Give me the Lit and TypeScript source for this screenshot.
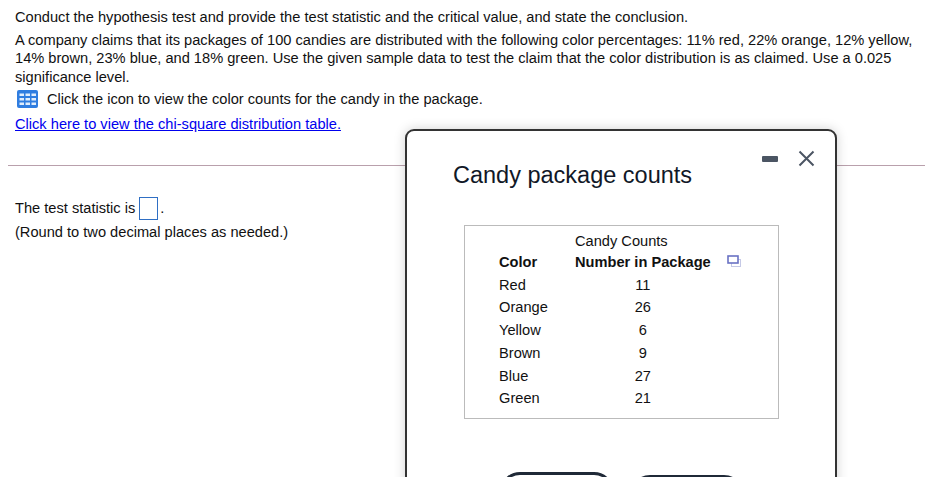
import { html, css, LitElement } from 'lit';
import { customElement } from 'lit/decorators.js';

const ROWS: [string, number][] = [
    ['Red', 11],
    ['Orange', 26],
    ['Yellow', 6],
    ['Brown', 9],
    ['Blue', 27],
    ['Green', 21],
];

@customElement('candy-dialog')
export class CandyDialog extends LitElement {
    static styles = css`
        :host {
            position: absolute;
            left: 405px;
            top: 129px;
            width: 432px;
            height: 420px;
            box-sizing: border-box;
            border: 2px solid #333;
            border-radius: 9px;
            background: #fff;
            box-shadow: 0 0 12px rgba(0, 0, 0, 0.18);
            padding: 29px 56px 0 46px;
            color: #1a1a2a;
        }

        .tools {
            position: absolute;
            top: 19px;
            right: 20px;
            display: flex;
            align-items: center;
            gap: 20px;
        }

        .tools svg {
            display: block;
        }

        h2 {
            margin: 0;
            font-size: 23.5px;
            line-height: 30px;
            font-weight: 400;
            color: #111827;
        }

        .panel {
            margin: 35px 0 0 11px;
            height: 194px;
            box-sizing: border-box;
            border: 1px solid #bbb;
            padding: 4.5px 0 0 34px;
            color: #111;
        }

        table {
            border-collapse: collapse;
            font-size: 14.63px;
        }

        td, th {
            padding: 0;
            height: 22.75px;
            font-weight: 400;
        }

        .head td {
            height: 20px;
        }

        .label {
            text-align: left;
            width: 76px;
        }

        .count {
            text-align: center;
            white-space: nowrap;
        }

        .title {
            text-align: left;
            white-space: nowrap;
        }

        .bold {
            font-weight: 700;
        }

        .copy {
            display: block;
            margin: -2px 0 0 16px;
        }

        .actions {
            display: flex;
            align-items: flex-start;
            gap: 16px;
            margin: 53px 0 0 47px;
        }

        .btn {
            box-sizing: border-box;
            height: 40px;
            width: 114px;
            border: 3px solid #1f2937;
            border-radius: 20px;
            background: #fff;
            flex: none;
        }

        .btn.two {
            margin-top: 3px;
        }
    `;

    render() {
        return html`
            <div class="tools">
                <svg width="16" height="16" viewBox="0 0 16 16"><rect x="0" y="5" width="16" height="6" rx="1" fill="#4b5563"></rect></svg>
                <svg width="17" height="17" viewBox="0 0 17 17"><path d="M1.5 1.5 L15.5 15.5 M15.5 1.5 L1.5 15.5" stroke="#4b5563" stroke-width="2" fill="none"></path></svg>
            </div>
            <h2>Candy package counts</h2>
            <div class="panel">
                <table>
                    <tr class="head">
                        <td class="label"></td>
                        <td class="title">Candy Counts</td>
                        <td></td>
                    </tr>
                    <tr>
                        <td class="label bold">Color</td>
                        <td class="count bold">Number in Package</td>
                        <td><svg class="copy" width="14" height="12" viewBox="0 0 14 12"><rect x="4.5" y="4.5" width="9" height="7" fill="#fff" stroke="#c5c9e6"></rect><rect x="1" y="1" width="10" height="7" fill="#fff" stroke="#6a72c4" stroke-width="1.6"></rect></svg></td>
                    </tr>
                    ${ROWS.map(([color, count]) => html`
                        <tr>
                            <td class="label">${color}</td>
                            <td class="count">${count}</td>
                            <td></td>
                        </tr>
                    `)}
                </table>
            </div>
            <div class="actions">
                <div class="btn one"></div>
                <div class="btn two"></div>
            </div>
        `;
    }
}

@customElement('app-root')
export class AppRoot extends LitElement {
    static styles = css`
        :host {
            display: block;
            position: relative;
            width: 925px;
            height: 477px;
            overflow: hidden;
            background: #fff;
            font-family: "Liberation Sans", Arial, sans-serif;
            font-size: 14.63px;
            color: #111;
        }

        .question {
            padding: 8px 0 0 15px;
            width: 905px;
        }

        p {
            margin: 0;
            line-height: 18.5px;
        }

        .lead {
            margin-bottom: 4px;
        }

        .icon-row {
            display: flex;
            align-items: center;
            gap: 9px;
            margin: 3px 0 6px 2px;
            line-height: 20px;
        }

        .icon-row svg {
            display: block;
        }

        a {
            color: #0000ee;
            line-height: 18px;
        }

        hr {
            border: 0;
            height: 1px;
            background: #b9a0ac;
            margin: 32px 0 0 8px;
        }

        .answer {
            padding: 31px 0 0 15px;
        }

        .statement {
            display: flex;
            align-items: center;
            line-height: 23px;
        }

        .box {
            box-sizing: border-box;
            width: 19px;
            height: 23px;
            border: 1px solid #2f6fc4;
            margin: 0 2px 0 4px;
        }

        .hint {
            margin-top: 3px;
        }
    `;

    render() {
        return html`
            <div class="question">
                <p class="lead">Conduct the hypothesis test and provide the test statistic and the critical value, and state the conclusion.</p>
                <p>A company claims that its packages of 100 candies are distributed with the following color percentages: 11% red, 22% orange, 12% yellow, 14% brown, 23% blue, and 18% green. Use the given sample data to test the claim that the color distribution is as claimed. Use a 0.025 significance level.</p>
                <div class="icon-row">
                    <svg width="21" height="18" viewBox="0 0 21 18">
                        <rect width="21" height="18" rx="2" fill="#2f7de0"></rect>
                        <g fill="#e0edfc">
                            <rect x="2.5" y="3.5" width="4.5" height="2.5"></rect><rect x="8.5" y="3.5" width="4.5" height="2.5"></rect><rect x="14.5" y="3.5" width="4.5" height="2.5"></rect>
                            <rect x="2.5" y="8" width="4.5" height="2.5"></rect><rect x="8.5" y="8" width="4.5" height="2.5"></rect><rect x="14.5" y="8" width="4.5" height="2.5"></rect>
                            <rect x="2.5" y="12.5" width="4.5" height="2.5"></rect><rect x="8.5" y="12.5" width="4.5" height="2.5"></rect><rect x="14.5" y="12.5" width="4.5" height="2.5"></rect>
                        </g>
                    </svg>
                    <span>Click the icon to view the color counts for the candy in the package.</span>
                </div>
                <a href="#">Click here to view the chi-square distribution table.</a>
            </div>
            <hr />
            <div class="answer">
                <div class="statement">The test statistic is<span class="box"></span>.</div>
                <p class="hint">(Round to two decimal places as needed.)</p>
            </div>
            <candy-dialog></candy-dialog>
        `;
    }
}
